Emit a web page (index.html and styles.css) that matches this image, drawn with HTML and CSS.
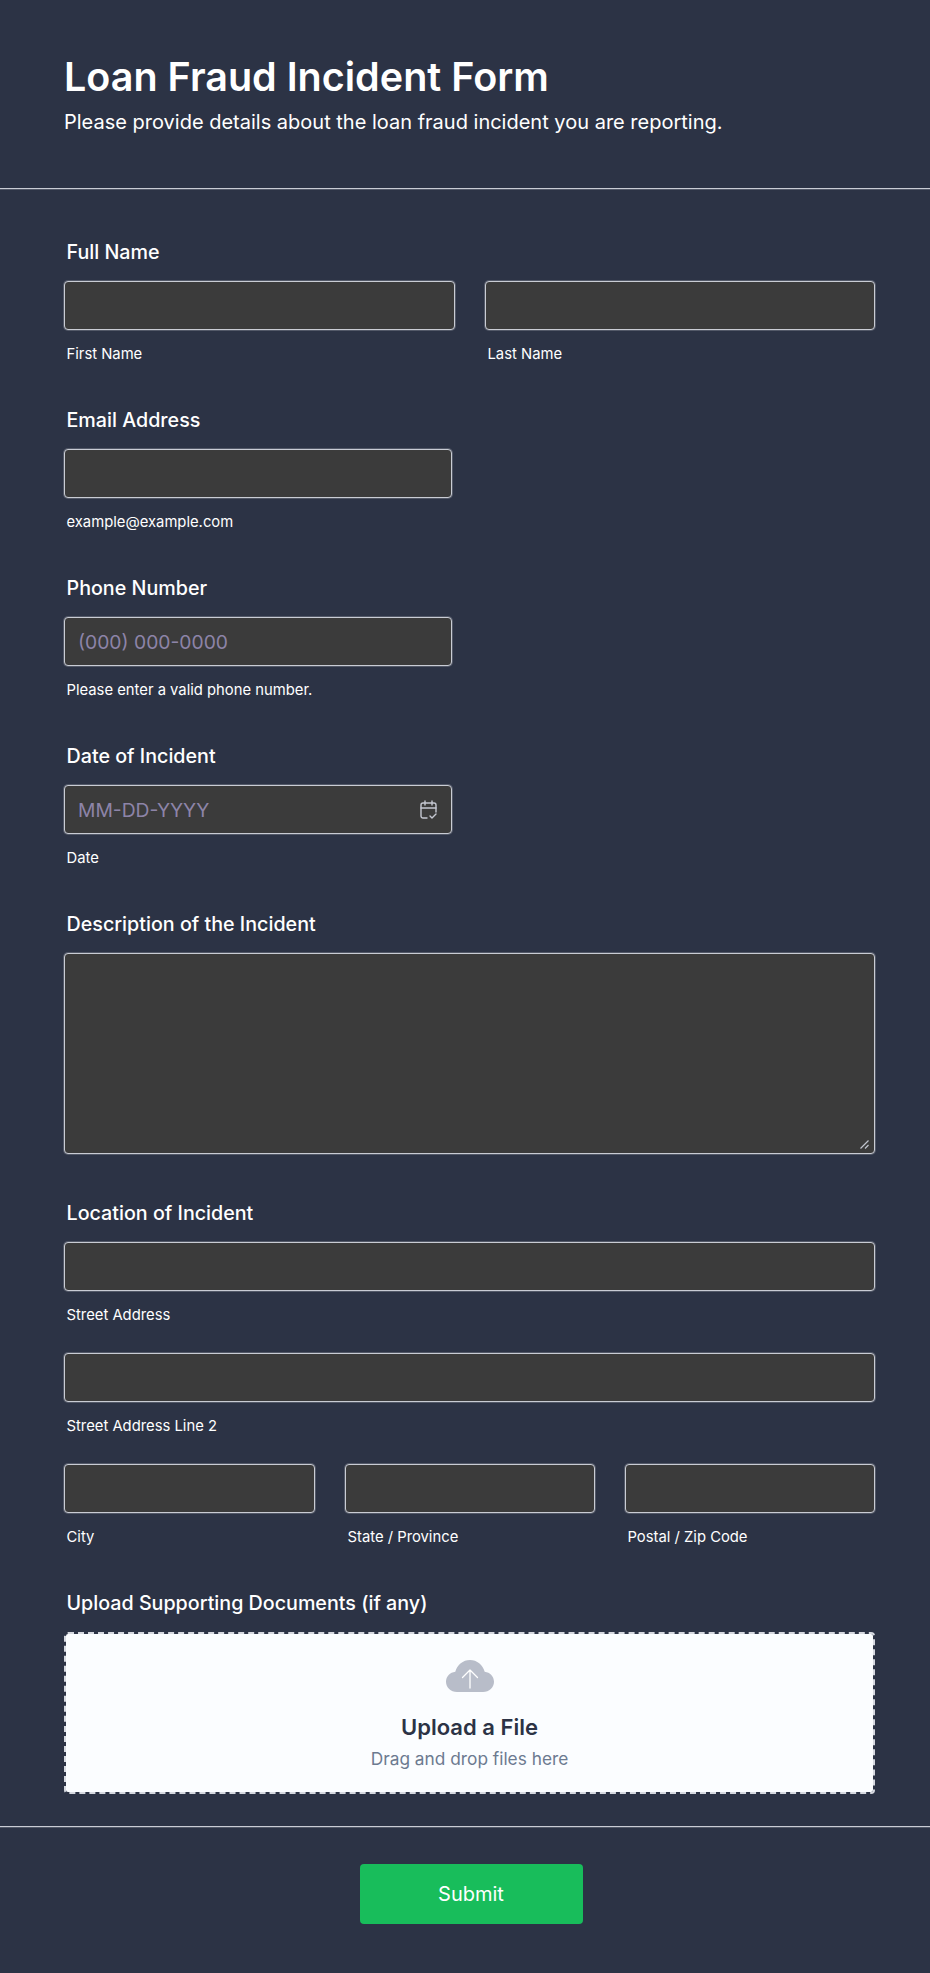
FILE: index.html
```html
<!DOCTYPE html>
<html lang="en">
<head>
<meta charset="utf-8">
<title>Loan Fraud Incident Form</title>
<link rel="stylesheet" href="styles.css">
</head>
<body>
<form class="form">
  <header class="head">
    <h1 class="title">Loan Fraud Incident Form</h1>
    <p class="subtitle">Please provide details about the loan fraud incident you are reporting.</p>
  </header>
  <div class="fields">
    <section class="field">
      <h2 class="label">Full Name</h2>
      <div class="row two">
        <div class="cell"><input class="input" type="text"><span class="sub">First Name</span></div>
        <div class="cell"><input class="input" type="text"><span class="sub">Last Name</span></div>
      </div>
    </section>
    <section class="field">
      <h2 class="label">Email Address</h2>
      <div class="cell narrow"><input class="input" type="text"><span class="sub">example@example.com</span></div>
    </section>
    <section class="field">
      <h2 class="label">Phone Number</h2>
      <div class="cell narrow"><input class="input" type="text" placeholder="(000) 000-0000"><span class="sub">Please enter a valid phone number.</span></div>
    </section>
    <section class="field">
      <h2 class="label">Date of Incident</h2>
      <div class="cell narrow">
        <div class="date">
          <input class="input" type="text" placeholder="MM-DD-YYYY">
          <svg class="cal" viewBox="0 0 17 19" width="17" height="19" fill="none" stroke="#c5c8d2" stroke-width="1.400" stroke-linecap="round" stroke-linejoin="round">
            <path d="M7 18H3a2 2 0 0 1-2-2V5a2 2 0 0 1 2-2h11a2 2 0 0 1 2 2v7"/>
            <path d="M1 8h15M5 1v4M12 1v4M10 16l2 2 4-4"/>
          </svg>
        </div>
        <span class="sub">Date</span>
      </div>
    </section>
    <section class="field field-area">
      <h2 class="label">Description of the Incident</h2>
      <div class="area-wrap">
        <textarea class="input area"></textarea>
        <svg class="grip" viewBox="0 0 9 9" width="9" height="9" fill="none" stroke="#c0c4ce" stroke-width="1.200">
          <path d="M.5 8.500 8.500.5M5 8.500 8.500 5"/>
        </svg>
      </div>
    </section>
    <section class="field address">
      <h2 class="label">Location of Incident</h2>
      <div class="cell"><input class="input" type="text"><span class="sub">Street Address</span></div>
      <div class="cell"><input class="input" type="text"><span class="sub">Street Address Line 2</span></div>
      <div class="row three">
        <div class="cell"><input class="input" type="text"><span class="sub">City</span></div>
        <div class="cell"><input class="input" type="text"><span class="sub">State / Province</span></div>
        <div class="cell"><input class="input" type="text"><span class="sub">Postal / Zip Code</span></div>
      </div>
    </section>
    <section class="field upload-field">
      <h2 class="label">Upload Supporting Documents (if any)</h2>
      <div class="upload">
        <svg class="cloud" viewBox="0 0 48 32" width="48" height="32">
          <path fill="#b8bdc9" d="M11 32C4.800 32 0 27.500 0 21.800 0 16.500 4 12.300 9.300 11.700 11.200 4.800 17 0 24 0s12.800 4.800 14.700 11.700C44 12.300 48 16.500 48 21.800 48 27.500 43.200 32 37 32Z"/>
          <path fill="none" stroke="#fff" stroke-width="1.300" stroke-linecap="round" stroke-linejoin="round" d="M24 28V10M16.500 17.500 24 10l7.500 7.500"/>
        </svg>
        <strong class="up-title">Upload a File</strong>
        <span class="up-text">Drag and drop files here</span>
      </div>
    </section>
  </div>
  <footer class="foot">
    <button class="submit" type="button">Submit</button>
  </footer>
</form>
</body>
</html>
```
FILE: styles.css
```css
* { box-sizing: border-box; }
html, body { margin: 0; padding: 0; }
body {
  background: #2c3345;
  color: #fff;
  font-family: Inter, "Liberation Sans", sans-serif;
}
.form { width: 930px; height: 1973px; }
.head {
  height: 189px;
  padding: 51px 64px 0;
  border-bottom: 1px solid #c9ccd4;
  box-shadow: 0 1px 0 rgba(201, 204, 212, .25);
}
.title {
  margin: 0;
  font-size: 39.500px;
  line-height: 52px;
  font-weight: 600;
}
.subtitle {
  margin: 4px 0 0;
  font-size: 20px;
  line-height: 30px;
  font-weight: 400;
}
.fields { padding: 47px 55px 0 64px; }
.field { margin-bottom: 40px; }
.field-area { margin-bottom: 43px; }
.label {
  margin: 0 0 13px;
  padding-left: 2.500px;
  font-size: 19.700px;
  line-height: 32px;
  font-weight: 500;
}
.row { display: grid; column-gap: 30px; }
.two { grid-template-columns: 391px 390px; }
.three { grid-template-columns: 251px 250px 250px; }
.cell { display: flex; flex-direction: column; }
.narrow { width: 388px; }
.input {
  display: block;
  width: 100%;
  height: 49px;
  padding: 0 13px;
  background: #3b3b3b;
  border: 1px solid #c9ccd4;
  border-radius: 4px;
  box-shadow: 0 0 0 1px rgba(201, 204, 212, .25);
  color: #fff;
  font: 400 19.300px Inter, "Liberation Sans", sans-serif;
  outline: none;
}
.input::placeholder { color: #8d84a8; opacity: 1; }
.sub {
  display: block;
  padding: 14px 0 0 2.500px;
  font-size: 14.800px;
  line-height: 20px;
}
.date { position: relative; }
.cal { position: absolute; top: 15px; right: 15px; }
.area-wrap { position: relative; }
.area { height: 201px; padding: 12px; resize: none; }
.grip { position: absolute; right: 6px; bottom: 5px; pointer-events: none; }
.address > .cell { margin-bottom: 28px; }
.upload-field { margin-bottom: 32px; }
.upload {
  display: flex;
  flex-direction: column;
  align-items: center;
  height: 162px;
  padding-top: 26px;
  background-color: #fbfdff;
  background-clip: padding-box;
  background-image: radial-gradient(circle, #cdf4f8 0.5px, transparent 0.7px);
  background-size: 8px 20px;
  border: 2px dashed #d6d9e0;
  border-radius: 4px;
}
.cloud { display: block; }
.up-title {
  margin-top: 20px;
  color: #2c3345;
  font-size: 22px;
  line-height: 30px;
  font-weight: 600;
}
.up-text {
  margin-top: 3px;
  color: #6c7a90;
  font-size: 17.300px;
  line-height: 28px;
}
.foot {
  display: flex;
  justify-content: center;
  padding-top: 37px;
  border-top: 1px solid #c9ccd4;
  box-shadow: inset 0 1px 0 rgba(201, 204, 212, .25);
}
.submit {
  width: 223px;
  height: 60px;
  margin-left: 12px;
  background: #18bd5b;
  border: 0;
  border-radius: 4px;
  color: #fff;
  font: 400 20px Inter, "Liberation Sans", sans-serif;
}
```
